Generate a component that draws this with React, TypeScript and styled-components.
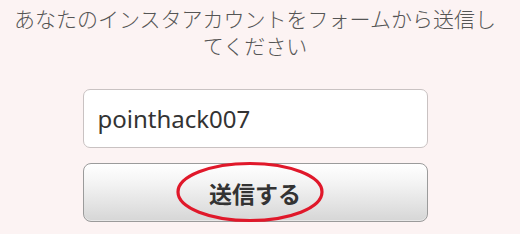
import React from "react";
import styled, { createGlobalStyle } from "styled-components";

const GlobalStyle = createGlobalStyle`
  html, body {
    margin: 0;
    padding: 0;
    background: #fcf3f3;
  }
  body {
    font-family: "Noto Sans CJK JP", "Noto Sans", sans-serif;
  }
`;

const Page = styled.div`
  width: 510px;
  height: 234px;
  display: flex;
  flex-direction: column;
  align-items: center;
  box-sizing: border-box;
  padding-top: 5px;
`;

const Lead = styled.p`
  margin: 0;
  width: 490px;
  text-align: center;
  font-size: 21px;
  line-height: 27px;
  font-weight: 300;
  color: #555;
`;

const Form = styled.form`
  width: 345px;
  margin-top: 30px;
  display: flex;
  flex-direction: column;
  gap: 15px;
`;

const Field = styled.input`
  box-sizing: border-box;
  width: 100%;
  height: 59px;
  border: 1px solid #c9c2c2;
  border-radius: 7px;
  background: #fff;
  padding: 0 14px;
  font-family: "Noto Sans", "Open Sans", sans-serif;
  font-size: 24px;
  color: #333;
  outline: none;
`;

const ButtonWrap = styled.div`
  position: relative;
  width: 100%;
`;

const Submit = styled.button`
  box-sizing: border-box;
  width: 100%;
  height: 59px;
  border: 1px solid #9b9b9b;
  border-radius: 8px;
  background: linear-gradient(#ffffff, #f3f3f3 35%, #d6d6d6);
  font-family: "Noto Sans CJK JP", sans-serif;
  font-size: 23px;
  font-weight: 700;
  color: #333;
  box-shadow: inset 0 -1px 0 #e8e8e8;
`;

const Circle = styled.svg`
  position: absolute;
  left: 91px;
  top: -3px;
  pointer-events: none;
`;

export default function App() {
  return (
    <>
      <GlobalStyle />
      <Page>
        <Lead>あなたのインスタアカウントをフォームから送信してください</Lead>
        <Form onSubmit={(e) => e.preventDefault()}>
          <Field defaultValue="pointhack007" />
          <ButtonWrap>
            <Submit type="submit">送信する</Submit>
            <Circle width="152" height="64" viewBox="0 0 152 64">
              <ellipse cx="76" cy="32" rx="72" ry="28.5" fill="none" stroke="#e0182a" strokeWidth="3.2" />
            </Circle>
          </ButtonWrap>
        </Form>
      </Page>
    </>
  );
}
